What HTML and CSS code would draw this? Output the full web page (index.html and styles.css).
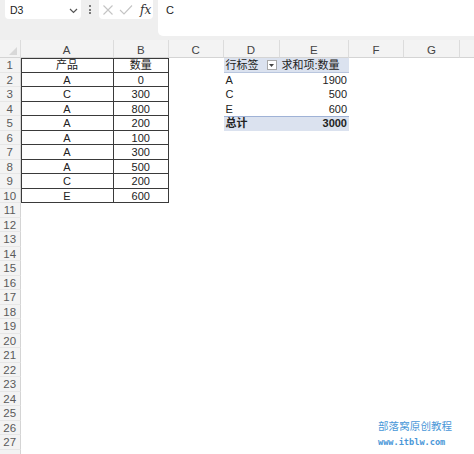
FILE: index.html
```html
<!DOCTYPE html>
<html>
<head>
<meta charset="utf-8">
<link rel="stylesheet" href="styles.css">
</head>
<body>
<div class="app">
  <div class="toolbar">
    <div class="namebox"><span>D3</span>
      <svg class="chev" width="9" height="6" viewBox="0 0 9 6"><path d="M1 1 L4.5 4.5 L8 1" fill="none" stroke="#555" stroke-width="1.2"/></svg>
    </div>
    <div class="dots"><i></i><i></i><i></i></div>
    <div class="fbtns">
      <svg width="12" height="12" viewBox="0 0 12 12"><path d="M1.5 1.5 L10.5 10.5 M10.5 1.5 L1.5 10.5" stroke="#c4c4c4" stroke-width="1.1" fill="none"/></svg>
      <svg width="14" height="12" viewBox="0 0 14 12"><path d="M1 6 L5 10 L13 1.5" stroke="#c4c4c4" stroke-width="1.1" fill="none"/></svg>
      <span class="fx">fx</span>
    </div>
    <div class="formula">C</div>
  </div>
  <div class="sheet">
    <div class="ch corner"><span class="tri"></span></div>
    <div class="ch">A</div><div class="ch">B</div><div class="ch">C</div><div class="ch">D</div><div class="ch">E</div><div class="ch">F</div><div class="ch">G</div><div class="ch last"></div>

    <div class="rn">1</div><div class="c ta tl tt">产品</div><div class="c tb tt">数量</div><div class="c"></div><div class="c ph">行标签<span class="dd"><svg width="5" height="3" viewBox="0 0 5 3"><path d="M0 0 H5 L2.5 3 Z" fill="#444"/></svg></span></div><div class="c ph phe">求和项:数量</div><div class="fill3"></div>
    <div class="rn">2</div><div class="c ta tl">A</div><div class="c tb">0</div><div class="c"></div><div class="c pl">A</div><div class="c pv">1900</div><div class="fill3"></div>
    <div class="rn">3</div><div class="c ta tl">C</div><div class="c tb">300</div><div class="c"></div><div class="c pl">C</div><div class="c pv">500</div><div class="fill3"></div>
    <div class="rn">4</div><div class="c ta tl">A</div><div class="c tb">800</div><div class="c"></div><div class="c pl">E</div><div class="c pv">600</div><div class="fill3"></div>
    <div class="rn">5</div><div class="c ta tl">A</div><div class="c tb">200</div><div class="c"></div><div class="c pt">总计</div><div class="c pt pv">3000</div><div class="fill3"></div>
    <div class="rn">6</div><div class="c ta tl">A</div><div class="c tb">100</div><div class="fill6"></div>
    <div class="rn">7</div><div class="c ta tl">A</div><div class="c tb">300</div><div class="fill6"></div>
    <div class="rn">8</div><div class="c ta tl">A</div><div class="c tb">500</div><div class="fill6"></div>
    <div class="rn">9</div><div class="c ta tl">C</div><div class="c tb">200</div><div class="fill6"></div>
    <div class="rn">10</div><div class="c ta tl">E</div><div class="c tb">600</div><div class="fill6"></div>
    <div class="rn">11</div><div class="fill"></div>
    <div class="rn">12</div><div class="fill"></div>
    <div class="rn">13</div><div class="fill"></div>
    <div class="rn">14</div><div class="fill"></div>
    <div class="rn">15</div><div class="fill"></div>
    <div class="rn">16</div><div class="fill"></div>
    <div class="rn">17</div><div class="fill"></div>
    <div class="rn">18</div><div class="fill"></div>
    <div class="rn">19</div><div class="fill"></div>
    <div class="rn">20</div><div class="fill"></div>
    <div class="rn">21</div><div class="fill"></div>
    <div class="rn">22</div><div class="fill"></div>
    <div class="rn">23</div><div class="fill"></div>
    <div class="rn">24</div><div class="fill"></div>
    <div class="rn">25</div><div class="fill"></div>
    <div class="rn">26</div><div class="fill"></div>
    <div class="rn">27</div><div class="fill"></div>
    <div class="rn"></div><div class="fill"></div>
  </div>
  <div class="watermark">
    <div class="wm1">部落窝原创教程</div>
    <div class="wm2">www.itblw.com</div>
  </div>
</div>
</body>
</html>
```
FILE: styles.css
```css
* { box-sizing: border-box; }
html, body { margin: 0; padding: 0; }
body {
  width: 474px;
  height: 454px;
  overflow: hidden;
  background: #fff;
  font-family: "Liberation Sans", "Noto Sans CJK SC", sans-serif;
  color: #222;
}
.app { position: relative; width: 474px; height: 454px; overflow: hidden; }

.toolbar {
  height: 40px;
  background: #efefef;
  display: flex;
  align-items: flex-start;
  padding-left: 5px;
}
.namebox {
  width: 76px;
  height: 19px;
  background: #fff;
  border-radius: 0 0 4px 4px;
  display: flex;
  align-items: center;
  justify-content: space-between;
  padding: 0 3px 0 5px;
  font-size: 10.5px;
  color: #222;
}
.chev { margin-top: 2px; }
.dots {
  width: 18px;
  height: 19px;
  display: flex;
  flex-direction: column;
  align-items: center;
  justify-content: center;
  gap: 1.5px;
}
.dots i { width: 2px; height: 2px; background: #555; border-radius: 50%; display: block; }
.fbtns {
  width: 54px;
  height: 19px;
  background: #fff;
  border-radius: 0 0 4px 4px;
  display: flex;
  align-items: center;
  padding-left: 3px;
  gap: 5px;
}
.fx {
  font-family: "DejaVu Serif", "Liberation Serif", serif;
  font-style: italic;
  font-size: 12px;
  color: #333;
  margin-left: 2px;
}
.formula {
  margin-left: 5px;
  flex: 1;
  height: 36px;
  background: #fff;
  border-radius: 0 0 0 5px;
  padding: 2px 0 0 8px;
  font-size: 11px;
  line-height: 16px;
  color: #222;
}

.sheet {
  display: grid;
  grid-template-columns: 20.5px 93px 55.5px 54.5px 56px 69.5px 55px 56px 14px;
  grid-template-rows: 18px;
  grid-auto-rows: 14.5px;
  font-size: 11px;
}
.ch {
  background: #f3f3f3;
  color: #444;
  font-size: 11.5px;
  line-height: 18px;
  text-align: center;
  border-right: 1px solid #dcdcdc;
  border-bottom: 1px solid #d4d4d4;
  padding-top: 1px;
}
.ch.last { border-right: none; }
.corner { position: relative; }
.tri {
  position: absolute; right: 3px; bottom: 2px;
  width: 0; height: 0;
  border-left: 8px solid transparent;
  border-bottom: 8px solid #d8d8d8;
}
.rn {
  background: #f3f3f3;
  color: #5a5a5a;
  font-size: 11.5px;
  line-height: 14.5px;
  text-align: center;
  border-right: 1px solid #d4d4d4;
  border-bottom: 1px solid #e6e6e6;
}
.c {
  line-height: 14px;
  white-space: nowrap;
  overflow: visible;
}
.ta, .tb {
  text-align: center;
  border-bottom: 1px solid #3a3a3a;
  border-right: 1px solid #3a3a3a;
}
.tl { border-left: 1px solid #3a3a3a; }
.tt { border-top: 1px solid #3a3a3a; line-height: 13px; }
.ph {
  background: #dbe2ef;
  position: relative;
  padding-left: 2px;
  border-bottom: 1px solid #b9c6de;
}
.phe { padding-left: 2px; }
.dd {
  position: absolute;
  right: 3px;
  top: 2px;
  width: 10px;
  height: 10px;
  background: #fff;
  border: 1px solid #a8a8a8;
  display: flex;
  align-items: center;
  justify-content: center;
}
.pl { padding-left: 2px; }
.pv { text-align: right; padding-right: 2px; }
.pt {
  background: #dbe2ef;
  border-top: 1px solid #9fb2d6;
  font-weight: bold;
  padding-left: 2px;
  line-height: 13px;
}
.pt.pv { padding-left: 0; padding-right: 2px; }
.fill3 { grid-column: 7 / -1; }
.fill6 { grid-column: 4 / -1; }
.fill { grid-column: 2 / -1; }

.watermark {
  position: absolute;
  left: 378px;
  top: 419px;
  color: #4a97d8;
}
.wm1 { font-family: "Noto Sans CJK SC", sans-serif; font-size: 10.5px; line-height: 14px; letter-spacing: 0.1px; }
.wm2 {
  font-family: "DejaVu Sans Mono", "Liberation Mono", monospace;
  font-size: 8.6px;
  line-height: 12px;
  margin-top: 3px;
  font-weight: bold;
}
```
